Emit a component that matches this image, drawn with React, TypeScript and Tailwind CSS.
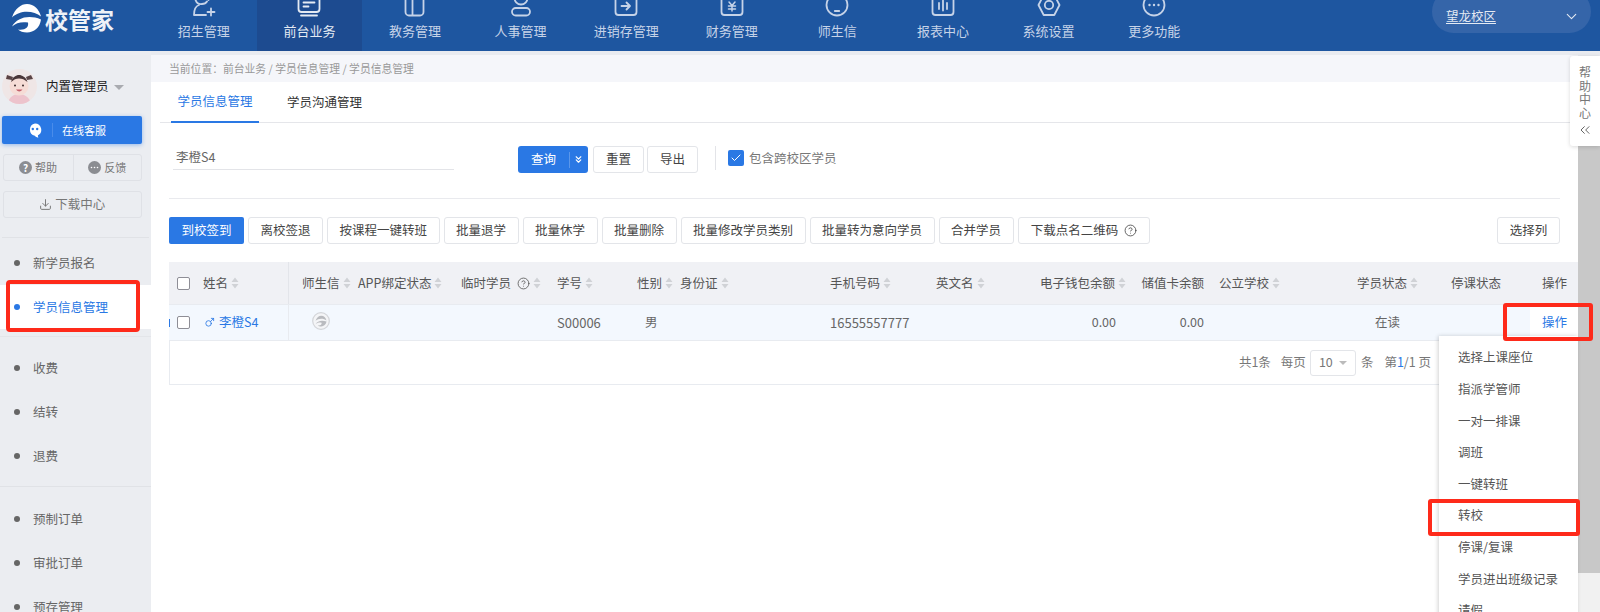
import { CircleHelp, Check, ChevronDown, ChevronsDown, ChevronsLeft, Download, Mars } from 'lucide-react';

const navItems = [
  { label: '招生管理', icon: <><path d="M8 4a6 6 0 0 0 4 11c2 0 4-.8 5-2.5M19 4a6 6 0 0 1-.5 7" /><path d="M9 16c-3 1-5 4-5 10h12" /><path d="M21 19.500v7M17.500 23h7" /></> },
  { label: '前台业务', active: true, icon: <><path d="M3.500 4v16a3 3 0 0 0 3 3h15a3 3 0 0 0 3-3V4" /><path d="M6 26.500h16" /><path d="M8.500 13.500h11M8.500 17.500h5" /></> },
  { label: '教务管理', icon: <><path d="M4.500 4v19a3.500 3.500 0 0 0 3.500 3.500h11a3.500 3.500 0 0 0 3.500-3.500V4" /><path d="M11.500 4v22" /></> },
  { label: '人事管理', icon: <><circle cx="14" cy="9" r="6.500" /><rect x="5" y="19" width="18" height="7.500" rx="3.700" /></> },
  { label: '进销存管理', icon: <><path d="M3.500 4v19a3 3 0 0 0 3 3h15a3 3 0 0 0 3-3V4" /><path d="M9.500 17h8.500M14.500 13.500 18 17l-3.500 3.500" /></> },
  { label: '财务管理', icon: <><path d="M5 8 3.500 11v12a3 3 0 0 0 3 3h15a3 3 0 0 0 3-3V11L23 8" /><path d="m11 13 3 3.500 3-3.500M10.500 17h7M10.500 20h7M14 16.500V22" strokeWidth="1.500" /></> },
  { label: '师生信', icon: <><circle cx="14" cy="16" r="10.500" /><path d="M11.800 22h4.400" /></> },
  { label: '报表中心', icon: <><path d="M3.500 4v19a3 3 0 0 0 3 3h15a3 3 0 0 0 3-3V4" /><path d="M10 14v6M14 11.500v10M18 14v6" /></> },
  { label: '系统设置', icon: <><path d="M3.500 16 8.700 6h10.600l5.200 10-5.200 10H8.700z" /><circle cx="14" cy="16" r="4.200" /></> },
  { label: '更多功能', icon: <><circle cx="14" cy="16" r="10.500" /><path d="M9.500 16h.01M14 16h.01M18.500 16h.01" strokeWidth="2.400" /></> },
];

const actions = ['离校签退', '按课程一键转班', '批量退学', '批量休学', '批量删除', '批量修改学员类别', '批量转为意向学员', '合并学员'];
const menuItems = ['选择上课座位', '指派学管师', '一对一排课', '调班', '一键转班', '转校', '停课/复课', '学员进出班级记录', '请假'];
const tableGrid = 'grid grid-cols-[34px_86px_69px_103px_96px_80px_43px_150px_106px_94px_100px_80px_120px_115px_85px_48px]';

// both parts of the swoosh mark, drawn on a 29 x 29 box
const markTop = 'M0 14C3 5 9 .5 15 .5c7 0 12 5 14 12.500C22 7 8 6 0 14z';
const markBottom = 'M0 23C5 14 17 11 29 16c-1 8-7 13-14 13-4 0-7-1-9-3 7 1 11-2 10-7-6-1-12 0-16 4z';

function Sort() {
  return (
    <svg width="8" height="12" viewBox="0 0 8 12" className="ml-[3px] shrink-0" fill="#d0d2d6">
      <path d="M4 .5 7.500 5H.5zM4 11.500.5 7h7z" />
    </svg>
  );
}

function Btn({ children, className = '' }: { children: React.ReactNode; className?: string }) {
  return (
    <div className={`flex h-[27px] items-center justify-center rounded-[3px] border border-[#e3e5e9] bg-white text-[#444] ${className}`}>
      {children}
    </div>
  );
}

function SideItem({ label, active }: { label: string; active?: boolean }) {
  return (
    <div className={`flex h-[44px] items-center pl-[14px] ${active ? 'bg-white text-[#2a78e4]' : 'text-[#666]'}`}>
      <span className={`h-[6px] w-[6px] rounded-full ${active ? 'bg-[#2a78e4]' : 'bg-[#666]'}`} />
      <span className="ml-[13px]">{label}</span>
    </div>
  );
}

function Th({ label, className = '', sort = true, help }: { label: string; className?: string; sort?: boolean; help?: boolean }) {
  return (
    <div className={`flex items-center ${className}`}>
      <span>{label}</span>
      {help && <CircleHelp size={13} strokeWidth={1.500} className="ml-[6px] shrink-0" />}
      {sort && <Sort />}
    </div>
  );
}

function Logo() {
  return (
    <svg width="29" height="30" viewBox="0 0 29 29" className="shrink-0" fill="#fff">
      <path d={markTop} />
      <path d={markBottom} />
    </svg>
  );
}

function Avatar() {
  return (
    <svg width="35" height="35" viewBox="0 0 35 35" className="shrink-0">
      <clipPath id="ava"><circle cx="17.500" cy="17.500" r="17.500" /></clipPath>
      <g clipPath="url(#ava)">
        <rect width="35" height="35" fill="#efe6e6" />
        <path d="M6 34c1-6 6-9 11-9s10 3 12 9v2H6z" fill="#edc3cc" />
        <circle cx="17" cy="17" r="9.500" fill="#f6dcd6" />
        <path d="M9 13c1.500-5 5-7 8-7s7 2 8.500 7c-3-2.500-5.500-3.500-8.500-3.500S12 10.500 9 13z" fill="#4a3638" />
        <path d="M11 8 5 6l-1 4 6 1zM24 8l5-2 2 4-6 1z" fill="#5a4446" />
        <circle cx="13" cy="16.500" r="1" fill="#3d2a2c" />
        <circle cx="21" cy="16.500" r="1" fill="#3d2a2c" />
        <path d="M14 20.500c2 2.500 4.500 2.500 6.500 0z" fill="#c4616c" />
      </g>
    </svg>
  );
}

export default function App() {
  return (
    <div className="relative flex h-[612px] w-[1600px] flex-col overflow-hidden bg-[#e9ebf0] font-['Noto_Sans_CJK_SC',sans-serif] text-[12.5px]">
      {/* top bar */}
      <header className="flex h-[51px] shrink-0 overflow-hidden bg-[#1e56a0]">
        <div className="flex w-[151px] shrink-0 items-start pl-[12px] pt-[3px]">
          <Logo />
          <span className="ml-[4px] mt-[-1px] text-[23px] font-bold leading-[34px] text-[#eef2f8]">校管家</span>
        </div>
        <nav className="flex">
          {navItems.map((item) => (
            <div key={item.label} className={`flex w-[105.6px] flex-col items-center justify-end pb-[11px] ${item.active ? 'bg-[#1d4b90] text-[#e4eaf3]' : 'text-[#c6d3e8]'}`}>
              <svg width="28" height="28" viewBox="0 0 28 28" fill="none" stroke="currentColor" strokeWidth="1.800" strokeLinecap="round" strokeLinejoin="round" className="mb-[5px] shrink-0">
                {item.icon}
              </svg>
              <span className="text-[13px] leading-[18px]">{item.label}</span>
            </div>
          ))}
        </nav>
        <div className="ml-auto mr-[9px] mt-[-10px] flex h-[43px] w-[159px] items-center justify-between rounded-full bg-[#3565a9] pl-[14px] pr-[11px] pt-[10px] text-[#e4eaf3]">
          <span className="underline underline-offset-2">望龙校区</span>
          <ChevronDown size={17} strokeWidth={1.500} />
        </div>
      </header>

      <div className="flex min-h-0 flex-1">
        {/* left menu */}
        <aside className="w-[151px] shrink-0 bg-[#ebedf1]">
          <div className="flex items-center pl-[2px] pt-[18px]">
            <Avatar />
            <span className="ml-[9px] text-[#222]">内置管理员</span>
            <span className="ml-[5px] mt-[2px] h-0 w-0 border-x-[5px] border-t-[5px] border-x-transparent border-t-[#a9abb0]" />
          </div>
          <div className="mx-[2px] mt-[12px] flex h-[28px] w-[140px] items-center rounded-[2px] bg-[#2a78e4] text-[11px] text-white shadow-[0_1px_4px_rgba(42,120,228,0.45)]">
            <svg width="14" height="15" viewBox="0 0 14 15" className="ml-[26px] shrink-0">
              <path d="M7 .5a6.300 6.300 0 0 1 3 11.800c-.3 1 .2 2 .8 2.300-1.800 0-3.300-.8-4-1.800A6.300 6.300 0 0 1 7 .5z" fill="#fff" />
              <circle cx="4.800" cy="6" r="1.200" fill="#2a78e4" />
              <circle cx="9.200" cy="6" r="1.200" fill="#2a78e4" />
            </svg>
            <span className="ml-[10px] h-[14px] w-px bg-[#4a8cea]" />
            <span className="ml-[9px]">在线客服</span>
          </div>
          <div className="mx-[2.5px] mt-[10px] flex h-[27px] w-[139.5px] items-center rounded-[3px] border border-[#dfe1e6] text-[11px] text-[#777]">
            <div className="flex h-full w-[70px] items-center justify-center border-r border-[#dfe1e6]">
              <span className="flex h-[13px] w-[13px] items-center justify-center rounded-full bg-[#8b8d92] text-[10px] font-bold leading-none text-white">?</span>
              <span className="ml-[3px]">帮助</span>
            </div>
            <div className="flex flex-1 items-center justify-center">
              <svg width="13" height="13" viewBox="0 0 13 13" className="shrink-0">
                <circle cx="6.500" cy="6.500" r="6.500" fill="#8b8d92" />
                <path d="M3.500 6.500h.01M6.500 6.500h.01M9.500 6.500h.01" stroke="#fff" strokeWidth="1.600" strokeLinecap="round" />
              </svg>
              <span className="ml-[3px]">反馈</span>
            </div>
          </div>
          <div className="mx-[2.5px] mt-[10px] flex h-[27px] w-[139.5px] items-center justify-center rounded-[3px] border border-[#dfe1e6] text-[#777]">
            <Download size={13} strokeWidth={1.800} />
            <span className="ml-[3px]">下载中心</span>
          </div>
          <div className="mx-[2px] mt-[19px] h-px bg-[#e0e2e6]" />
          <div className="mt-[3px]">
            <SideItem label="新学员报名" />
            <SideItem label="学员信息管理" active />
          </div>
          <div className="mt-[7px] h-px bg-[#e3e5e9]" />
          <div className="mt-[9px]">
            <SideItem label="收费" />
            <SideItem label="结转" />
            <SideItem label="退费" />
          </div>
          <div className="mt-[8px] h-px bg-[#e0e2e6]" />
          <div className="mt-[10px]">
            <SideItem label="预制订单" />
            <SideItem label="审批订单" />
            <SideItem label="预存管理" />
          </div>
        </aside>

        {/* main */}
        <main className="flex w-[1427px] shrink-0 flex-col pt-[4px]">
          <div className="flex h-[27px] shrink-0 items-center bg-[#f5f6fa] pl-[18px] text-[10.8px] text-[#999]">
            当前位置：前台业务 / 学员信息管理 / 学员信息管理
          </div>
          <div className="flex-1 bg-white">
            <div className="ml-[9px] flex h-[41px] border-b border-[#e5e6ea]">
              <div className="ml-[11px] flex h-[41px] w-[88px] items-center justify-center border-b-2 border-[#2a78e4] text-[#2a78e4]">学员信息管理</div>
              <div className="ml-[28px] flex h-[40px] items-center text-[#333]">学员沟通管理</div>
            </div>

            <div className="pl-[18px]">
              <div className="mt-[23px] flex h-[27px]">
                <div className="ml-[4px] flex h-[24px] w-[281px] items-center border-b border-[#e3e4e8] pl-[3px] text-[#666]">李橙S4</div>
                <div className="ml-[64px] flex h-[27px] w-[70px] items-center rounded-[3px] bg-[#2a78e4] text-white">
                  <span className="ml-[13px]">查询</span>
                  <span className="ml-[13px] h-[16px] w-px bg-[#5b97ea]" />
                  <ChevronsDown size={11} strokeWidth={2.500} className="ml-[3px]" />
                </div>
                <Btn className="ml-[5px] w-[51px]">重置</Btn>
                <Btn className="ml-[3px] w-[51px]">导出</Btn>
                <span className="ml-[17px] h-[24px] w-px bg-[#e3e4e8]" />
                <div className="ml-[12px] flex h-[24px] items-center text-[#777]">
                  <span className="flex h-[16px] w-[16px] items-center justify-center rounded-[2px] bg-[#2a78e4] text-white">
                    <Check size={12} strokeWidth={2} />
                  </span>
                  <span className="ml-[5px]">包含跨校区学员</span>
                </div>
              </div>

              <div className="mt-[25px] h-px w-[1391px] bg-[#e9eaee]" />

              <div className="mt-[18px] flex w-[1391px] gap-[4px]">
                <div className="flex h-[27px] w-[75px] items-center justify-center rounded-[2px] bg-[#2a78e4] text-white">到校签到</div>
                {actions.map((a) => (
                  <Btn key={a} className="px-[11.5px]">{a}</Btn>
                ))}
                <Btn className="px-[12px]">
                  下载点名二维码
                  <CircleHelp size={13} strokeWidth={1.500} className="ml-[6px]" />
                </Btn>
                <Btn className="ml-auto w-[63px]">选择列</Btn>
              </div>

              {/* table */}
              <div className="mt-[18px] w-[1409px]">
                <div className={`${tableGrid} h-[43px] items-stretch border-b border-[#e8ebf0] bg-[#f0f1f5] text-[#555]`}>
                  <div className="flex items-center pl-[8px]">
                    <span className="h-[13px] w-[13px] rounded-[2px] border border-[#8e8e96] bg-white" />
                  </div>
                  <Th label="姓名" className="border-r border-[#e3e5ea]" />
                  <Th label="师生信" className="pl-[13px]" />
                  <Th label="APP绑定状态" />
                  <Th label="临时学员" help />
                  <Th label="学号" />
                  <Th label="性别" />
                  <Th label="身份证" />
                  <Th label="手机号码" />
                  <Th label="英文名" />
                  <Th label="电子钱包余额" className="justify-end pr-[4px]" />
                  <Th label="储值卡余额" sort={false} className="justify-end pr-[6px]" />
                  <Th label="公立学校" className="pl-[9px]" />
                  <Th label="学员状态" className="justify-center" />
                  <Th label="停课状态" sort={false} className="pl-[6px]" />
                  <Th label="操作" sort={false} className="pl-[12px]" />
                </div>
                <div className={`${tableGrid} h-[36px] items-stretch border-b border-[#e8ebf0] bg-[#f3f8fe] text-[#666]`}>
                  <div className="flex items-center">
                    <span className="h-[8px] w-px bg-[#2a78e4]" />
                    <span className="ml-[7px] h-[13px] w-[13px] rounded-[2px] border border-[#8e8e96] bg-white" />
                  </div>
                  <div className="flex items-center border-r border-[#e8ebf0] text-[#2a78e4]">
                    <Mars size={11} strokeWidth={1.800} className="ml-[1px]" />
                    <span className="ml-[4px]">李橙S4</span>
                  </div>
                  <div className="flex items-center pl-[23px]">
                    <svg width="18" height="18" viewBox="0 0 18 18" className="mt-[-4px]">
                      <circle cx="9" cy="9" r="8.300" fill="#f4f5f7" stroke="#d3d5d9" strokeWidth="1.200" />
                      <g transform="translate(3.500 3.500) scale(0.38)" fill="#b9bbbf">
                        <path d={markTop} />
                        <path d={markBottom} />
                      </g>
                    </svg>
                  </div>
                  <div />
                  <div />
                  <div className="flex items-center text-[13px]">S00006</div>
                  <div className="flex items-center pl-[8px]">男</div>
                  <div />
                  <div className="flex items-center text-[13px]">16555557777</div>
                  <div />
                  <div className="flex items-center justify-end pr-[14px]">0.00</div>
                  <div className="flex items-center justify-end pr-[6px]">0.00</div>
                  <div />
                  <div className="flex items-center justify-center">在读</div>
                  <div />
                  <div className="flex items-center bg-white pl-[12px] text-[#2a78e4]">操作</div>
                </div>
                <div className="flex h-[44px] items-center justify-end border-b border-l border-[#e8ebf0] pr-[147px] text-[#777]">
                  <span>共1条</span>
                  <span className="ml-[10px]">每页</span>
                  <div className="ml-[4px] flex h-[26px] w-[46px] items-center justify-between rounded-[3px] border border-[#e3e5e9] px-[8px]">
                    <span>10</span>
                    <span className="h-0 w-0 border-x-[4px] border-t-[4px] border-x-transparent border-t-[#bbb]" />
                  </div>
                  <span className="ml-[5px]">条</span>
                  <span className="ml-[11px]">第<span className="text-[#2a78e4]">1</span>/1 页</span>
                </div>
              </div>
            </div>
          </div>
        </main>

        {/* scrollbar */}
        <div className="mt-[5px] flex w-[22px] shrink-0 flex-col">
          <div className="h-[517px] bg-[#c8c8c8]" />
          <div className="flex-1 bg-[#f1f1f1]" />
        </div>
      </div>

      {/* help tab */}
      <div className="absolute right-0 top-[56px] flex h-[90px] w-[30px] flex-col items-center rounded-l-[3px] bg-white pt-[9px] text-[12px] leading-[13.500px] text-[#777] shadow-[0_1px_4px_rgba(0,0,0,0.15)]">
        <span>帮</span>
        <span>助</span>
        <span>中</span>
        <span>心</span>
        <ChevronsLeft size={16} strokeWidth={1.500} className="mt-[3px] text-[#666]" />
      </div>

      {/* row action menu */}
      <div className="absolute left-[1439px] top-[336px] w-[139px] bg-white pt-[6px] text-[#555] shadow-[-1px_0_4px_rgba(0,0,0,0.18)]">
        {menuItems.map((m) => (
          <div key={m} className="flex h-[31.600px] items-center pl-[19px]">{m}</div>
        ))}
      </div>

      {/* red marks drawn on the screenshot */}
      <div className="absolute left-[6px] top-[280px] h-[52px] w-[134px] rounded-[4px] border-[4px] border-[#fe2a1a]" />
      <div className="absolute left-[1503px] top-[303px] h-[38px] w-[90px] rounded-[3px] border-[4px] border-[#fe2a1a]" />
      <div className="absolute left-[1428px] top-[499px] h-[37px] w-[152px] rounded-[3px] border-[4px] border-[#fe2a1a]" />
    </div>
  );
}
